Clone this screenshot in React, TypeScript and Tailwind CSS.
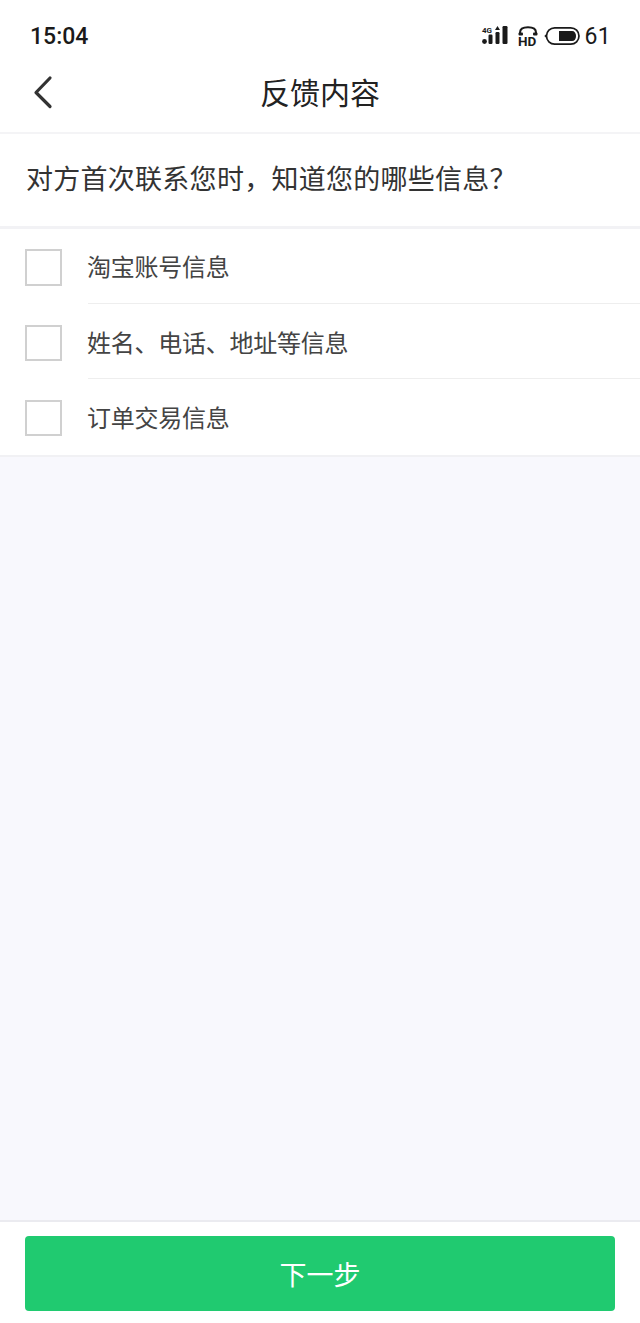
import React from "react";

const items = [
  { t: "淘宝账号信息", row: "h-[75px]", box: "h-[37px] mt-[1px]", text: "" },
  { t: "姓名、电话、地址等信息", row: "h-[75px]", box: "h-[36px] mt-[2px]", text: "pt-[2px]" },
  { t: "订单交易信息", row: "h-[76px]", box: "h-[36px] mt-[1px]", text: "" },
];

function StatusIcons() {
  return (
    <div className="flex items-center">
      <svg width="28" height="22" viewBox="0 1 28 22" className="text-[#1a1a1a] overflow-visible">
        <text x="0" y="9" fontSize="8" fontWeight="700" fill="currentColor" fontFamily="Roboto, sans-serif">4G</text>
        <circle cx="2.5" cy="17.5" r="2.4" fill="currentColor" />
        <rect x="6.5" y="10.5" width="4" height="9.5" rx="1.2" fill="currentColor" />
        <rect x="13.5" y="8" width="4" height="12" rx="1.2" fill="currentColor" />
        <path d="M15.5 2 L18 6 L13 6 Z" fill="currentColor" />
        <rect x="20.5" y="2" width="5" height="18" rx="1.2" fill="currentColor" />
      </svg>
      <svg width="22" height="22" viewBox="0 0 22 22" className="ml-[7px] text-[#1a1a1a] overflow-visible">
        <path d="M3 10 V7.5 C3 4 6.5 2.2 11 2.2 C15.5 2.2 19 4 19 7.5 V10" fill="none" stroke="currentColor" strokeWidth="2" />
        <rect x="1.5" y="7.5" width="4.5" height="3" rx="1" fill="currentColor" />
        <rect x="16" y="7.5" width="4.5" height="3" rx="1" fill="currentColor" />
        <text x="1" y="20.5" fontSize="13.5" fontWeight="700" fill="currentColor" fontFamily="Roboto, sans-serif">HD</text>
      </svg>
      <svg width="36" height="20" viewBox="0 0 36 20" className="ml-[5px] text-[#1a1a1a]">
        <rect x="2.5" y="1.8" width="32.5" height="16.4" rx="8.2" fill="none" stroke="currentColor" strokeWidth="1.7" />
        <path d="M0.3 10 L2.8 7.5 V12.5 Z" fill="currentColor" />
        <path d="M15 5 H28 C30.5 5 32 7 32 10 C32 13 30.5 15 28 15 H15 Z" fill="currentColor" />
      </svg>
      <span className="ml-[5px] text-[23px] leading-none text-[#1a1a1a] tracking-[0.3px]">61</span>
    </div>
  );
}

export default function App() {
  return (
    <div className="w-[640px] h-[1323px] flex flex-col bg-[#f8f8fd] overflow-hidden">
      <div className="font-['Roboto','Noto_Sans_CJK_SC',sans-serif] bg-white">
        <div className="h-[62px] pl-[30px] pr-[29px] pt-[10px] flex items-center justify-between">
          <span className="text-[23px] font-medium leading-none text-[#1a1a1a]">15:04</span>
          <StatusIcons />
        </div>
        <div className="h-[70px] relative flex items-center justify-center">
          <svg className="absolute left-[32px] top-[11px]" width="22" height="36" viewBox="0 0 22 36" fill="none">
            <path d="M18 5 L4 19.5 L18 33.5" stroke="#333333" strokeWidth="3.2" strokeLinecap="round" strokeLinejoin="round" />
          </svg>
          <span className="text-[30px] leading-none text-[#222222] pb-[6px]">反馈内容</span>
        </div>
      </div>

      <div className="font-['Noto_Sans_CJK_SC',sans-serif] flex flex-col flex-1">
        <div className="h-[94px] bg-white border-t-[2px] border-[#f4f4f6] flex items-center pl-[26px] pb-[5px]">
          <span className="text-[27px] leading-none text-[#333333] tracking-[0.27px]">对方首次联系您时，知道您的哪些信息？</span>
        </div>

        <div className="h-[3px] bg-[#f2f2f5]" />

        <div className="bg-white border-b-[2px] border-[#f1f1f4] h-[228px] flex flex-col">
          {items.map((it, i) => (
            <div key={it.t} className={`flex items-center pl-[25px] ${it.row}`}>
              <div className={`w-[37px] shrink-0 border-2 border-[#d0d0d0] bg-white ${it.box}`} />
              <div className={`ml-[26px] flex-1 h-full flex items-center ${it.text} ${i < 2 ? "border-b-[1px] border-[#eeeeee]" : ""}`}>
                <span className="-ml-[1px] text-[24px] leading-none text-[#444444] tracking-[-0.25px]">{it.t}</span>
              </div>
            </div>
          ))}
        </div>

        <div className="flex-1" />

        <div className="h-[103px] bg-white border-t-[2px] border-[#ebebf0] px-[25px] pt-[14px]">
          <button className="w-[590px] h-[75px] rounded-[4px] bg-[#20ca70] text-white text-[27px] leading-none flex items-center justify-center">
            下一步
          </button>
        </div>
      </div>
    </div>
  );
}
